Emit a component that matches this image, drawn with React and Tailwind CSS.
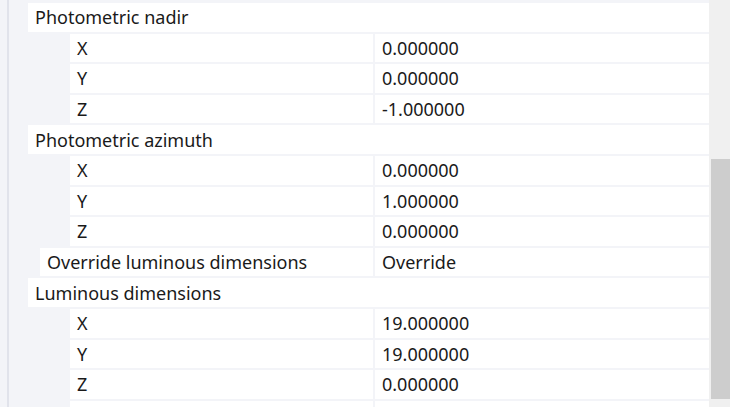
import React from 'react';

const rows = [
  { type: 'group', label: 'Photometric nadir' },
  { type: 'sub', label: 'X', value: '0.000000' },
  { type: 'sub', label: 'Y', value: '0.000000' },
  { type: 'sub', label: 'Z', value: '-1.000000' },
  { type: 'group', label: 'Photometric azimuth' },
  { type: 'sub', label: 'X', value: '0.000000' },
  { type: 'sub', label: 'Y', value: '1.000000' },
  { type: 'sub', label: 'Z', value: '0.000000' },
  { type: 'prop', label: 'Override luminous dimensions', value: 'Override' },
  { type: 'group', label: 'Luminous dimensions' },
  { type: 'sub', label: 'X', value: '19.000000' },
  { type: 'sub', label: 'Y', value: '19.000000' },
  { type: 'sub', label: 'Z', value: '0.000000' },
  { type: 'sub', label: '', value: '' },
];

function Row({ row }) {
  if (row.type === 'group') {
    return (
      <div className="ml-[19px] flex h-[28.6px] shrink-0 items-center bg-white pl-[7px]">
        {row.label}
      </div>
    );
  }
  const indent = row.type === 'sub' ? 'ml-[61px] pl-[7px]' : 'ml-[31px] pl-[7px]';
  return (
    <div className="flex h-[28.6px] shrink-0 gap-[2px]">
      <div className={`flex flex-1 items-center bg-white ${indent}`}>{row.label}</div>
      <div className="flex w-[334px] items-center bg-white pl-[7px]">{row.value}</div>
    </div>
  );
}

export default function App() {
  return (
    <div
      className="flex h-[407px] w-[730px] overflow-hidden bg-[#f3f4f8] text-[18px] leading-none text-[#1a1a1a]"
      style={{ fontFamily: '"Noto Sans", "Open Sans", sans-serif' }}
    >
      <div className="w-[7px] shrink-0" />
      <div className="w-[2px] shrink-0 bg-[#e1e3eb]" />
      <div className="flex w-[700px] shrink-0 flex-col gap-[2px] pt-[3px]">
        {rows.map((r, i) => (
          <Row key={i} row={r} />
        ))}
      </div>
      <div className="flex w-[21px] shrink-0 flex-col bg-[#f0f0f0] pl-[2px] pt-[159px] pb-[8px]">
        <div className="flex-1 bg-[#cdcdcd]" />
      </div>
    </div>
  );
}
